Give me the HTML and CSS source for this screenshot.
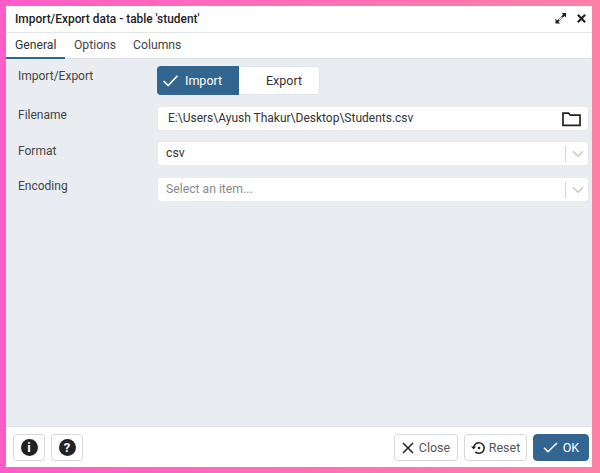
FILE: index.html
```html
<!DOCTYPE html>
<html lang="en">
<head>
<meta charset="utf-8">
<title>Import/Export data</title>
<link rel="stylesheet" href="styles.css">
</head>
<body>
<div class="dialog">
  <header class="titlebar">
    <span class="title">Import/Export data - table 'student'</span>
    <span class="win-icons">
      <svg width="13" height="13" viewBox="0 0 14 14"><path d="M8 1h5v5l-1.8-1.8-6.4 6.4L6.6 12.4H1.6V7.4l1.8 1.8 6.4-6.4z" fill="#222"/><path d="M5.4 8.6l3.2-3.2" stroke="#fff" stroke-width="1.2"/></svg>
      <svg width="11" height="11" viewBox="0 0 12 12"><path d="M2 2l8 8M10 2l-8 8" stroke="#222" stroke-width="2.4"/></svg>
    </span>
  </header>
  <nav class="tabs">
    <span class="tab active">General</span>
    <span class="tab">Options</span>
    <span class="tab">Columns</span>
  </nav>
  <main class="content">
    <div class="row row-toggle">
      <label class="label">Import/Export</label>
      <div class="toggle">
        <span class="toggle-btn on">
          <svg width="17" height="13" viewBox="0 0 18 14"><path d="M1.5 7.5l5 5L16.5 1.8" fill="none" stroke="#fff" stroke-width="1.7"/></svg>
          Import
        </span>
        <span class="toggle-btn off">Export</span>
      </div>
    </div>
    <div class="row row-file">
      <label class="label">Filename</label>
      <div class="field file-field">
        <span class="file-text">E:\Users\Ayush Thakur\Desktop\Students.csv</span>
        <svg class="folder" width="19" height="16" viewBox="0 0 19 16"><path d="M1 14V2.2h5.6l1.8 2h9.6V14.4H1z" fill="none" stroke="#222" stroke-width="1.7"/></svg>
      </div>
    </div>
    <div class="row row-format">
      <label class="label">Format</label>
      <div class="field select-field">
        <span class="value">csv</span>
        <span class="caret"><svg width="12" height="8" viewBox="0 0 12 8"><path d="M1 1.2l5 5 5-5" fill="none" stroke="#c8c8c8" stroke-width="1.6"/></svg></span>
      </div>
    </div>
    <div class="row row-enc">
      <label class="label">Encoding</label>
      <div class="field select-field">
        <span class="value placeholder">Select an item...</span>
        <span class="caret"><svg width="12" height="8" viewBox="0 0 12 8"><path d="M1 1.2l5 5 5-5" fill="none" stroke="#c8c8c8" stroke-width="1.6"/></svg></span>
      </div>
    </div>
  </main>
  <footer class="footer">
    <div class="group">
      <span class="btn icon-btn"><span class="round">i</span></span>
      <span class="btn icon-btn"><span class="round">?</span></span>
    </div>
    <div class="group">
      <span class="btn btn-close">
        <svg width="12" height="12" viewBox="0 0 12 12"><path d="M1 1l10 10M11 1L1 11" stroke="#222" stroke-width="1.5"/></svg>
        Close
      </span>
      <span class="btn btn-reset">
        <svg width="15" height="14" viewBox="0 0 15 14"><path d="M2.6 7a5.3 5.3 0 1 1 1.7 3.9" fill="none" stroke="#222" stroke-width="1.5"/><path d="M0 5.6h5.2L2.6 8.6z" fill="#222"/><circle cx="8" cy="7" r="1.3" fill="#222"/></svg>
        Reset
      </span>
      <span class="btn btn-ok">
        <svg width="15" height="11" viewBox="0 0 15 11"><path d="M1 5.8l4 4L14 1" fill="none" stroke="#fff" stroke-width="1.5"/></svg>
        OK
      </span>
    </div>
  </footer>
</div>
</body>
</html>
```
FILE: styles.css
```css
* { box-sizing: border-box; }
html, body { height: 100%; }
body {
  margin: 0;
  padding: 6px 8px 6px 6px;
  background: linear-gradient(90deg, #ff5cc9 0%, #ff6fb6 50%, #ff80a6 100%);
  font-family: Roboto, "Liberation Sans", sans-serif;
  color: #222;
  font-size: 12px;
  overflow: hidden;
}
.dialog {
  height: 461px;
  display: flex;
  flex-direction: column;
  background: #fff;
}
.titlebar {
  height: 27px;
  flex: none;
  display: flex;
  align-items: center;
  justify-content: space-between;
  padding: 0 5px 1px 9px;
  border-bottom: 1px solid #e3e6ea;
}
.title { font-weight: 500; font-size: 11.9px; color: #222; }
.win-icons { display: flex; align-items: center; gap: 9px; }
.tabs {
  height: 26px;
  flex: none;
  display: flex;
  border-bottom: 1px solid #dde0e6;
}
.tab {
  padding: 5px 8.5px 0;
  color: #444;
  font-size: 12.2px;
}
.tab.active {
  color: #333;
  border-bottom: 2px solid #326690;
  height: 26px;
  padding: 5px 9px 0;
}
.content {
  flex: 1;
  background: #e9ecf1;
  padding: 7px 4px 0 12px;
  display: flex;
  flex-direction: column;
}
.row {
  display: grid;
  grid-template-columns: 139px 1fr;
}
.row-toggle { height: 40px; }
.row-file { height: 35px; }
.row-format { height: 36px; }
.row-enc { height: 36px; }
.label { color: #444; font-size: 12px; padding-top: 3px; }
.row-file .label, .row-enc .label { padding-top: 2px; }
.toggle {
  display: flex;
  width: 163px;
  height: 29px;
  background: #fff;
  border-radius: 4px;
  border: 1px solid #e1e4ea;
}
.toggle-btn {
  display: flex;
  align-items: center;
  gap: 6px;
  color: #333;
  font-size: 12.5px;
}
.toggle-btn.on {
  background: #326690;
  color: #fff;
  border-radius: 4px 0 0 4px;
  margin: -1px 0 -1px -1px;
  width: 82px;
  height: 29px;
  padding-left: 5px;
}
.toggle-btn.off {
  padding-left: 27px;
}
.field {
  height: 25px;
  width: 432px;
  background: #fff;
  border-radius: 4px;
  border: 1px solid #e9ebef;
  display: flex;
  align-items: center;
  justify-content: space-between;
  font-size: 12px;
  color: #333;
}
.file-text { padding-left: 10px; padding-bottom: 2px; }
.folder { margin-right: 7px; }
.value { padding-left: 8px; font-size: 12.2px; }
.select-field .value { padding-bottom: 2px; }
.select-field .placeholder { padding-bottom: 1px; }
.placeholder { color: #8a8a8a; }
.caret {
  display: flex;
  align-items: center;
  padding: 0 4px 0 6px;
  height: 16px;
  border-left: 1px solid #d4d4d4;
}
.footer {
  height: 41px;
  flex: none;
  border-top: 1px solid #dde0e6;
  display: flex;
  justify-content: space-between;
  padding: 7px 3px 0 7px;
  background: #fff;
}
.group { display: flex; gap: 6px; }
.btn {
  height: 27px;
  display: flex;
  align-items: center;
  justify-content: center;
  gap: 5px;
  border: 1px solid #d5d8dc;
  border-radius: 4px;
  background: #fff;
  color: #555;
  font-size: 12.5px;
}
.icon-btn { width: 32px; }
.round {
  width: 17px;
  height: 17px;
  border-radius: 50%;
  background: #222;
  color: #fff;
  font-weight: 700;
  font-size: 13px;
  line-height: 17px;
  text-align: center;
}
.btn-close { width: 64px; }
.btn-reset { width: 63px; gap: 3px; }
.btn-ok {
  width: 56px;
  background: #326690;
  border-color: #326690;
  color: #fff;
}
```
